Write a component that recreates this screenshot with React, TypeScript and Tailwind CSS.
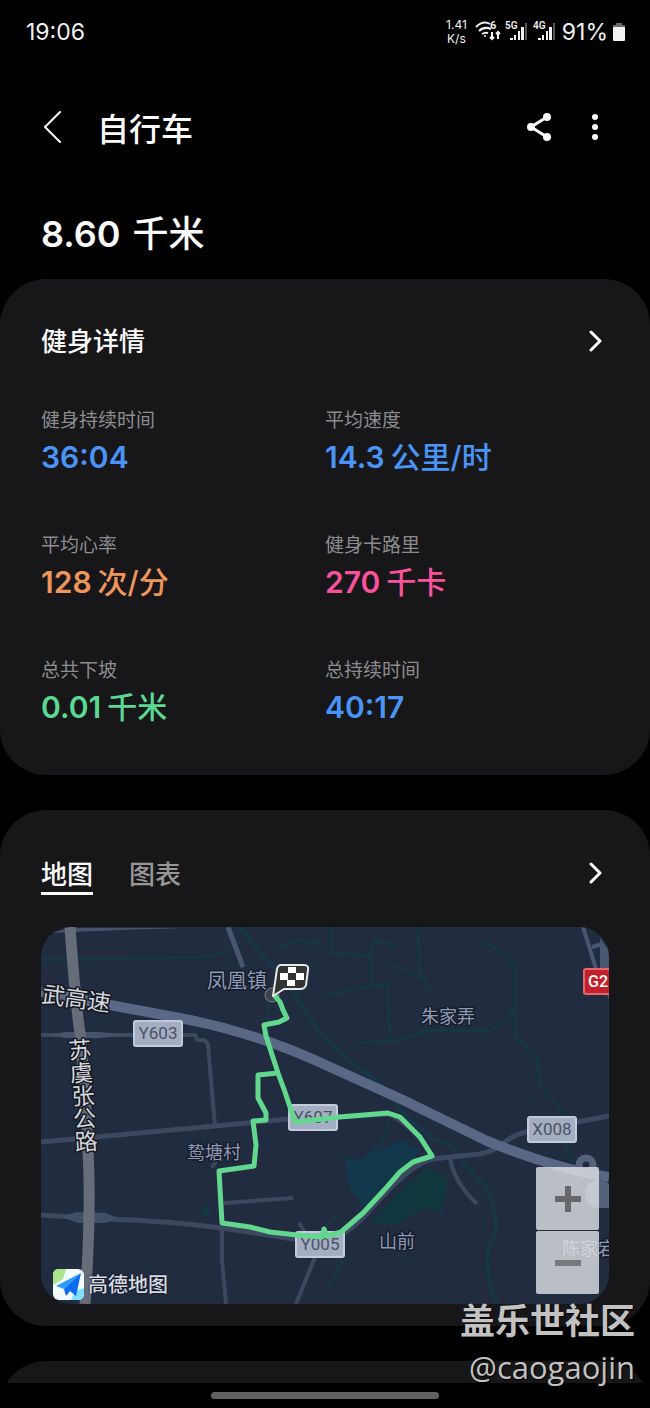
const sans = "font-[Inter,'Noto_Sans_CJK_SC',sans-serif]";

const stats = [
  { label: '健身持续时间', value: '36:04', unit: '', color: 'text-[#4a94f7]' },
  { label: '平均速度', value: '14.3', unit: '公里/时', color: 'text-[#4a94f7]' },
  { label: '平均心率', value: '128', unit: '次/分', color: 'text-[#ee955a]' },
  { label: '健身卡路里', value: '270', unit: '千卡', color: 'text-[#f8529b]' },
  { label: '总共下坡', value: '0.01', unit: '千米', color: 'text-[#5bd892]' },
  { label: '总持续时间', value: '40:17', unit: '', color: 'text-[#4a94f7]' },
];

function Signal({ label }: { label: string }) {
  return (
    <svg viewBox="0 0 23 24" className="h-6 w-[23px]" fill="#f2f2f2">
      <text x="0" y="9" fontSize="10" fontWeight="600" fontFamily="Roboto, sans-serif">{label}</text>
      <rect x="5" y="18" width="3" height="2" />
      <rect x="9" y="15" width="2" height="5" />
      <rect x="13" y="11" width="2" height="9" />
      <rect x="16" y="7" width="3" height="13" />
      <rect x="20" y="3" width="2" height="17" fill="#555" />
    </svg>
  );
}

function StatusBar() {
  return (
    <div className="flex h-16 items-center justify-between pl-[26px] pr-6 text-[#f2f2f2]">
      <span className="text-[23px]">19:06</span>
      <div className="flex items-center">
        <div className="mr-2 text-center text-[12px] leading-[14px]">
          <div>1.41</div>
          <div>K/s</div>
        </div>
        <svg viewBox="0 0 28 24" className="mr-[2px] h-6 w-7" fill="none" stroke="#f2f2f2" strokeWidth="2">
          <path d="M1 7q7-7 14-3" />
          <path d="M4 11q5-5 12-2" />
          <path d="M7 14q3-2 6-1" />
          <circle cx="10" cy="16" r="1" fill="#f2f2f2" stroke="none" />
          <path d="M17 12v7M15 17l2 2 2-2M23 19v-7M21 14l2-2 2 2" />
          <text x="15" y="9" fontSize="11" fontWeight="700" fontFamily="Roboto, sans-serif" fill="#f2f2f2" stroke="none">6</text>
        </svg>
        <div className="flex gap-[5px]">
          <Signal label="5G" />
          <Signal label="4G" />
        </div>
        <span className="ml-[6px] text-[23px]">91%</span>
        <svg viewBox="0 0 14 20" className="ml-1 h-5 w-[14px]">
          <path d="M4 1h6v2h3v3H1V3h3z" fill="#6b6b6b" />
          <rect x="1" y="5" width="12" height="14" rx="1" fill="#f2f2f2" />
        </svg>
      </div>
    </div>
  );
}

function Chevron() {
  return (
    <svg viewBox="0 0 14 22" className="h-[22px] w-[14px]" fill="none" stroke="currentColor" strokeWidth="3" strokeLinecap="round" strokeLinejoin="round">
      <path d="M2 2L11 11L2 20" />
    </svg>
  );
}

function RoadSign({ x, y, text }: { x: number; y: number; text: string }) {
  return (
    <g>
      <rect x={x} y={y} width="48" height="25" rx="2" fill="#a4aec3" stroke="#c3cbdb" strokeWidth="2" />
      <text x={x + 24} y={y + 18} textAnchor="middle" fontSize="17" fontFamily="Roboto, sans-serif" fill="#4b5364">
        {text}
      </text>
    </g>
  );
}

function RouteMap() {
  return (
    <svg viewBox="41 927 568 377" className="block h-auto w-full" role="img" aria-label="骑行路线地图">
      <rect x="41" y="927" width="568" height="377" fill="#212c41" />

      {/* Water */}
      <g fill="none" stroke="#163746" strokeWidth="3" strokeLinejoin="round">
        <path d="M41 960L200 957L220 954L240 942" />
        <path d="M240 927L262 955L282 975L320 1033L345 1057L378 1082L405 1115L432 1138L452 1146L466 1166L488 1190Q503 1225 490 1245Q482 1265 497 1304" strokeWidth="4" />
        <path d="M331 927V953L369 956L375 940L396 946M371 956V982M388 962L420 977M418 927L420 975L433 993M325 995L387 983L390 1040" />
        <path d="M345 1050L360 1043L400 1040L430 1030L490 1031L508 1018L515 1008M483 940L500 952L515 965V1035L537 1060L540 1085L560 1108L567 1150L573 1162" />
        <path d="M268 1005V1040M275 950L298 940L325 945M388 1120Q388 1140 373 1150M340 1215L325 1225M343 1260L335 1275L327 1289" />
      </g>
      <path d="M345 1160L352 1156L358 1162L372 1151L384 1149L400 1140L420 1150L412 1163L385 1187L366 1208L350 1190Z" fill="#11394b" />
      <path d="M370 1222L400 1192L428 1167L448 1178L442 1212L425 1208L395 1225Z" fill="#12383f" />
      <circle cx="206" cy="1211" r="5" fill="#163746" />

      {/* Minor roads */}
      <g fill="none" stroke="#3c485f" strokeWidth="4" strokeLinejoin="round">
        <path d="M41 1035H195L197 1040H204Q207 1041 208 1045L215 1126" />
        <path d="M41 1142L215 1126L290 1119L388 1114Q400 1117 420 1138L434 1158" strokeWidth="5" />
        <path d="M41 1215L105 1219Q170 1221 222 1228L300 1240L340 1235Q355 1228 370 1210Q410 1164 432 1159L480 1154Q495 1151 505 1142Q515 1134 530 1131L609 1116" strokeWidth="5" />
        <path d="M222 1228V1260L226 1304M315 1257L296 1304M224 1203L293 1198M212 1168L219 1155M299 1223L307 1236" />
        <path d="M450 1156Q452 1180 477 1204" />
        <path d="M228 927L243 967" strokeWidth="5" stroke="#4a566f" />
        <path d="M583 927L601 985M592 947L602 944" stroke="#4a566f" />
      </g>
      <path d="M50 933L70 928H185L120 930Z" fill="#46536b" />
      <path d="M50 1035L65 1032H100L130 1035L100 1038H65Z" fill="#46536b" />
      <path d="M62 1217L76 1212L105 1213L118 1218L105 1223H78Z" fill="#3f4f66" />
      <path d="M600 938L609 950V1000L600 975Z" fill="#4a566f" />

      {/* Highways */}
      <path d="M70 927Q76 1010 81 1040Q88 1130 89 1180T85 1304" fill="none" stroke="#666d79" strokeWidth="11" />
      <path d="M41 992L110 1005L190 1020Q260 1034 330 1067L403 1100L487 1141Q560 1170 609 1177" fill="none" stroke="#5a6785" strokeWidth="10" />
      <circle cx="586" cy="1165" r="7" fill="#212c41" stroke="#56627c" strokeWidth="7" />
      <path d="M597 1176Q601 1184 609 1190" fill="none" stroke="#56627c" strokeWidth="5" />
      <circle cx="599" cy="1194" r="14" fill="#56627c" />
      <path d="M599 1204H609" fill="none" stroke="#56627c" strokeWidth="8" />

      {/* Road signs */}
      <RoadSign x={134} y={1021} text="Y603" />
      <RoadSign x={289} y={1105} text="Y607" />
      <RoadSign x={528} y={1117} text="X008" />
      <RoadSign x={296} y={1232} text="Y005" />
      <rect x="584" y="969" width="40" height="25" rx="2" fill="#c4202b" stroke="#e4666e" strokeWidth="2" />
      <text x="588" y="987" fontSize="16" fontWeight="500" fontFamily="Roboto, sans-serif" fill="#fff">G2</text>

      {/* Place names */}
      <g fontFamily="'Noto Sans CJK SC', sans-serif" paintOrder="stroke" strokeLinejoin="round">
        <g fontSize="18" fill="#8f99b3" stroke="#151c2b" strokeWidth="3">
          <text x="207" y="988" fontSize="20">凤凰镇</text>
          <text x="421" y="1023">朱家弄</text>
          <text x="187" y="1159">鸷塘村</text>
          <text x="379" y="1248">山前</text>
          <text x="562" y="1255">陈家宕</text>
        </g>
        <g fontSize="23" fill="#d3d6dc" stroke="#14181f" strokeWidth="3">
          <text x="41" y="1002" transform="rotate(8 41 1002)">武高速</text>
          <text x="79" y="1038" className="[writing-mode:vertical-rl]" transform="rotate(-4 79 1038)">苏虞张公路</text>
        </g>
      </g>

      {/* Recorded route */}
      <circle cx="272" cy="995" r="7" fill="#3d4450" stroke="#7b818c" />
      <path
        d="M275 996L280 1002L283 1010L287 1018L279 1022L264 1025L266 1036L278 1073L258 1075V1098L266 1113V1120L253 1121L256 1145L254 1166L219 1171L222 1223L250 1227L270 1232L297 1235L322 1237L324 1229L327 1236L341 1232L363 1213L387 1187L400 1172L413 1162L432 1156L420 1137L400 1117L388 1113L340 1117L295 1122L285 1092L278 1073"
        fill="none"
        stroke="#62d78e"
        strokeWidth="5"
        strokeLinejoin="round"
        strokeLinecap="round"
      />
      <path d="M281 965H304Q309 965 308 970L306 985Q305 989 300 989H284L273 996L277 969Q278 965 281 965Z" fill="#333" stroke="#e4e8e6" strokeWidth="2" strokeLinejoin="round" />
      <path d="M288 967h8v6h-8zM280 973h8v7h-8zM296 973h8v7h-8zM287 980h8v6h-8z" fill="#fff" />
    </svg>
  );
}

function AmapLogo() {
  return (
    <div className="absolute bottom-1 left-3 flex items-center gap-1">
      <svg viewBox="0 0 31 31" className="h-[31px] w-[31px]">
        <rect width="31" height="31" rx="6" fill="#f4fbff" />
        <path d="M6 0H13L10 10L0 16V6Q0 0 6 0Z" fill="#a9e58d" />
        <path d="M31 19V25Q31 31 25 31H18L22 22Z" fill="#7fe0fb" />
        <path d="M28 4L3 17L11 20Z" fill="#2b9bff" />
        <path d="M28 4L11 20L13 27L17 22L23 27Z" fill="#0b6cf0" />
      </svg>
      <span className="text-[20px] font-medium leading-6 text-[#d7dae0] [text-shadow:0_0_2px_#000]">高德地图</span>
    </div>
  );
}

export default function App() {
  return (
    <div className={`relative flex flex-col overflow-hidden bg-black text-[#fafafa] ${sans}`}>
      <StatusBar />

      <header className="flex h-[126px] items-center px-[41px]">
        <button type="button" aria-label="返回" className="pl-[2px]">
          <svg viewBox="0 0 18 32" className="h-8 w-[18px]" fill="none" stroke="currentColor" strokeWidth="2" strokeLinecap="round" strokeLinejoin="round">
            <path d="M17 1L2 16L17 31" />
          </svg>
        </button>
        <h1 className="ml-9 pt-[6px] text-[32px] font-medium leading-10">自行车</h1>
        <button type="button" aria-label="分享" className="ml-auto">
          <svg viewBox="0 0 26 28" className="h-7 w-[26px]" fill="currentColor">
            <path d="M21 4L5 14L21 24" fill="none" stroke="currentColor" strokeWidth="3" />
            <circle cx="21" cy="4" r="4" />
            <circle cx="5" cy="14" r="4" />
            <circle cx="21" cy="24" r="4" />
          </svg>
        </button>
        <button type="button" aria-label="更多选项" className="ml-10 mr-[11px]">
          <svg viewBox="0 0 6 28" className="h-7 w-[6px]" fill="currentColor">
            <circle cx="3" cy="4" r="3" />
            <circle cx="3" cy="14" r="3" />
            <circle cx="3" cy="24" r="3" />
          </svg>
        </button>
      </header>

      <p className="mb-5 mt-[19px] flex items-baseline gap-3 px-[41px] text-[36px] font-semibold leading-[50px]">
        8.60 <span className="font-medium">千米</span>
      </p>

      <section className="rounded-[46px] bg-[#17171a] px-[41px] pb-12 pt-11">
        <div className="mb-[46px] flex h-9 items-center justify-between">
          <h2 className="text-[26px] font-medium">健身详情</h2>
          <button type="button" aria-label="查看健身详情" className="mr-[6px]">
            <Chevron />
          </button>
        </div>
        <dl className="grid grid-cols-2 gap-y-[53px]">
          {stats.map((stat) => (
            <div key={stat.label}>
              <dt className="text-[19px] leading-8 text-[#8c8c8f]">{stat.label}</dt>
              <dd className={`flex h-10 items-baseline gap-[6px] text-[30px] font-semibold leading-10 ${stat.color}`}>
                <span>{stat.value}</span>
                {stat.unit && <span className="font-medium">{stat.unit}</span>}
              </dd>
            </div>
          ))}
        </dl>
      </section>

      <section className="mt-[35px] rounded-[46px] bg-[#17171a] px-[41px] pb-[22px] pt-12">
        <div className="mb-8 flex items-start justify-between">
          <div role="tablist" className="flex gap-9 text-[26px] font-medium leading-[34px]">
            <button type="button" role="tab" aria-selected="true" className="border-b-[3px] border-[#fafafa]">地图</button>
            <button type="button" role="tab" aria-selected="false" className="border-b-[3px] border-transparent text-[#979797]">图表</button>
          </div>
          <button type="button" aria-label="查看地图" className="mr-[6px] pt-1">
            <Chevron />
          </button>
        </div>
        <div className="relative overflow-hidden rounded-[30px]">
          <RouteMap />
          <AmapLogo />
          <div className="absolute bottom-[10px] right-[10px] flex flex-col gap-px">
            <button type="button" aria-label="放大" className="flex h-[63px] w-[63px] items-center justify-center rounded-[2px] bg-[#e1e3e6]/80">
              <svg viewBox="0 0 26 26" className="h-[26px] w-[26px]">
                <path d="M13 0V26M0 13H26" stroke="#66686b" strokeWidth="6" />
              </svg>
            </button>
            <button type="button" aria-label="缩小" className="flex h-[63px] w-[63px] items-center justify-center rounded-[2px] bg-[#e1e3e6]/80">
              <svg viewBox="0 0 26 26" className="h-[26px] w-[26px]">
                <path d="M0 13H26" stroke="#77797d" strokeWidth="6" />
              </svg>
            </button>
          </div>
        </div>
      </section>

      {/* Top of the next card */}
      <div className="mt-[35px] h-[22px] overflow-hidden">
        <section className="h-24 rounded-t-[46px] bg-[#171717]" />
      </div>

      <div className="flex h-[25px] items-center justify-center">
        <div className="h-[7px] w-[35%] rounded-full bg-[#626262]" />
      </div>

      <div className="absolute bottom-5 right-[15px] text-right text-[#c2c2c2] [text-shadow:1px_1px_1px_#000]">
        <div className="text-[35px] font-bold leading-[50px]">盖乐世社区</div>
        <div className="font-['Open_Sans',sans-serif] text-[31px] leading-[42px]">@caogaojin</div>
      </div>
    </div>
  );
}
